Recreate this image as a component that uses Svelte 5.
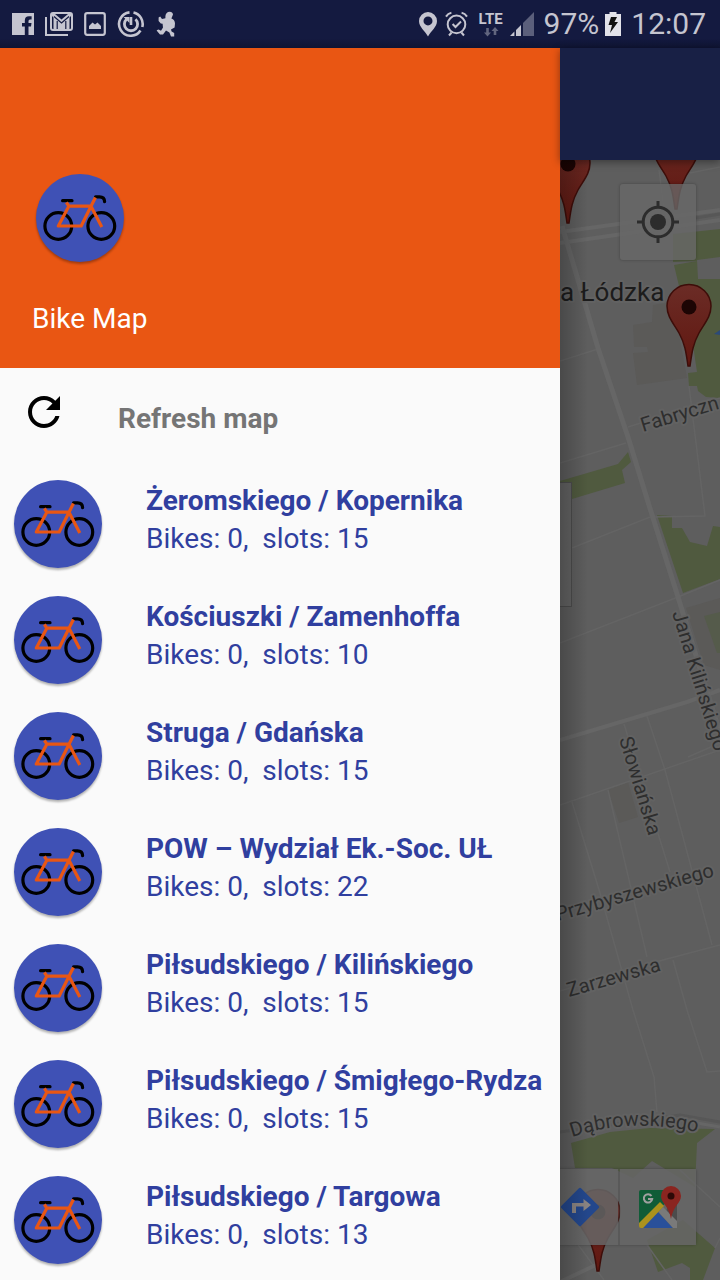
<script>
  const stations = [
    { name: 'Żeromskiego / Kopernika', bikes: 0, slots: 15 },
    { name: 'Kościuszki / Zamenhoffa', bikes: 0, slots: 10 },
    { name: 'Struga / Gdańska', bikes: 0, slots: 15 },
    { name: 'POW – Wydział Ek.-Soc. UŁ', bikes: 0, slots: 22 },
    { name: 'Piłsudskiego / Kilińskiego', bikes: 0, slots: 15 },
    { name: 'Piłsudskiego / Śmigłego-Rydza', bikes: 0, slots: 15 },
    { name: 'Piłsudskiego / Targowa', bikes: 0, slots: 13 }
  ];
  const markers = [
    { x: 568, y: 223 },
    { x: 676, y: 209 },
    { x: 689, y: 366 },
    { x: 598, y: 1271 }
  ];
</script>

{#snippet bikeLogo()}
  <svg class="logo" viewBox="0 0 88 88" aria-hidden="true">
    <circle cx="44" cy="44" r="44" fill="#3f51b5" />
    <g fill="none" stroke-width="3.2" stroke-linecap="round" stroke-linejoin="round">
      <g stroke="#000">
        <circle cx="22.3" cy="52" r="13.4" />
        <circle cx="65.3" cy="52" r="13.4" />
        <path d="M26.6 26.7H36M59.5 22.9H63.5Q68.4 23 68.6 27.6" />
      </g>
      <path stroke="#e95613" stroke-linecap="butt" d="M30.4 28.3L32.8 32.2L22.3 52H45.2L55 32.2H32.8M59.4 23.6L55 32.2L65.8 53" />
    </g>
  </svg>
{/snippet}

<div class="app">
  <header class="status">
    <div class="notes">
      <svg width="22" height="24" viewBox="0 0 22 24"><path fill="#c5c5d0" d="M0 1H22V23H16.500V14.500H19L19.500 11H16.500V9Q16.500 7.500 18 7.500H19.600V4.200H17Q12.800 4.200 12.800 8.600V11H10V14.500H12.800V23H0Z" /></svg>
      <svg width="28" height="24" viewBox="0 0 28 24"><g fill="none" stroke="#c5c5d0" stroke-width="2"><path d="M1 5V23H23" /><rect x="6" y="1" width="21" height="17" rx="2" /></g><path fill="#c5c5d0" d="M7 2H10L16.500 7.500L23 2H26V4L24.500 5.500V17H8.500V5.500L7 4Z" /><path fill="none" stroke="#141a40" stroke-width="1.200" d="M9 4.500L16.500 11L24 4.500M12.200 9V17M20.800 9V17" /></svg>
      <svg width="22" height="24" viewBox="0 0 22 24"><rect x="1.200" y="1.200" width="19.600" height="21.600" rx="2" fill="none" stroke="#c5c5d0" stroke-width="2.200" /><path fill="#c5c5d0" d="M5 17V14L8.500 10.500L11 12.500L13.500 10.500L17 14V17Z" /></svg>
      <svg width="28" height="26" viewBox="0 0 28 26"><g fill="none" stroke="#c5c5d0"><path stroke-width="2.600" d="M12.500 1.400A11.700 11.700 0 1 0 23.500 19.500M25.300 16A11.700 11.700 0 0 0 16.500 1.600" /><path stroke-width="2.800" d="M9.500 8.300A6.600 6.600 0 1 0 18.500 8.300" /><path stroke-width="2.600" d="M14 14V6" /></g><path fill="#c5c5d0" d="M6.500 6H12.500V12Z" /></svg>
      <svg width="20" height="26" viewBox="0 0 20 26"><path fill="#c5c5d0" d="M12 1Q16.400 0 17 3.500L15.400 7.500Q18.800 8.500 19 12.500L18.600 16.500L15 18.600L15.600 20.400L18.200 22V25.600H15L13.400 21.600L10 19.600L7 23.600H4L1.400 20.400L.6 19.200L2.600 18.400L5 19.800L7 16.400L6.600 12.800L4.800 12.600L2.600 10V6.600L4.200 5.600L6 8L9.400 7.200Q9 2.400 12 1Z" /></svg>
    </div>
    <div class="system">
      <svg width="20" height="26" viewBox="0 0 20 26"><path fill="#c5c5d0" fill-rule="evenodd" d="M10 1A9 9 0 0 0 1 10C1 16 7 20 10 25.400C13 20 19 16 19 10A9 9 0 0 0 10 1ZM10 5.400A4.500 4.500 0 1 1 10 14.400A4.500 4.500 0 1 1 10 5.400Z" /></svg>
      <svg width="24" height="26" viewBox="0 0 24 26"><g fill="none" stroke="#c5c5d0" stroke-width="2"><circle cx="12.500" cy="13.400" r="8.800" /><path d="M8.600 13L11.500 16L17 10.500M2 5.600Q4 2.400 7.400 1.800M23 5.600Q21 2.400 17.600 1.800M7.600 21.500L5 24.500M17.400 21.500L20 24.500" /></g></svg>
      <div class="network apart">
        <b>LTE</b>
        <svg width="16" height="10" viewBox="0 0 16 10"><path fill="#62667f" d="M3.200 1H5.800V5.500H8L4.500 9.500L1 5.500H3.200ZM10.700 8H13.300V4H15.500L12 0L8.500 4H10.700Z" /></svg>
      </div>
      <svg width="24" height="26" viewBox="0 0 24 26"><path fill="#5b5f7b" d="M13 12L24 1V25H13Z" /><path fill="#c5c5d0" d="M0 25L4.400 20.600V25ZM6 19L11 14V25H6Z" /></svg>
      <span class="apart">97%</span>
      <svg width="16" height="26" viewBox="0 0 16 26"><path fill="#e3e3ea" d="M0 3H4.500V1H11.500V3H16V25H0Z" /><path fill="#111" d="M6 6H12L9.500 11H13L5 22L7 14H3.500Z" /></svg>
      <span class="apart">12:07</span>
    </div>
  </header>

  <div class="body">
    <nav class="drawer">
      <div class="brand">
        {@render bikeLogo()}
        <span>Bike Map</span>
      </div>
      <button class="refresh">
        <svg width="48" height="48" viewBox="0 0 24 24" aria-hidden="true"><path d="M17.65 6.35C16.2 4.9 14.21 4 12 4c-4.420 0-7.990 3.580-7.990 8s3.570 8 7.990 8c3.730 0 6.840-2.550 7.730-6h-2.080c-.82 2.330-3.040 4-5.650 4-3.310 0-6-2.690-6-6s2.690-6 6-6c1.660 0 3.140.69 4.220 1.780L13 11h7V4l-2.350 2.350z" /></svg>
        <span>Refresh map</span>
      </button>
      {#each stations as s}
        <button class="station">
          {@render bikeLogo()}
          <span class="info">
            <strong>{s.name}</strong>
            <span>{`Bikes: ${s.bikes},  slots: ${s.slots}`}</span>
          </span>
        </button>
      {/each}
    </nav>

    <main class="content">
      <div class="toolbar"></div>
      <div class="map">
        <svg class="canvas" viewBox="560 160 160 1120" preserveAspectRatio="xMinYMin slice">
          <defs>
            <linearGradient id="pin" x1="0" y1="0" x2="0" y2="1">
              <stop offset="0" stop-color="#6b2c26" />
              <stop offset="1" stop-color="#611710" />
            </linearGradient>
            <path id="curve" d="M572 1137Q635 1116 704 1134" />
          </defs>
          <g fill="#5b5a58">
            <path d="M633 325L652 322L653 305L673 302L687 378L637 385L633 353L648 352L647 347L634 347ZM608 790L628 782L638 817L619 823ZM686 608L720 598V670L704 665Z" />
          </g>
          <g fill="#505a3f">
            <path d="M673 234L720 229V257L697 260L698 279H720V398L706 397L698 391L697 386H689L688 373L697 372L693 345L674 265L697 261L673 262Z" />
            <path d="M560 481L618 464L628 452L631 462L622 470L625 483L572 499L560 502Z" />
            <path d="M657 515L672 516V528H682L690 542L707 546L713 526L720 527V579L683 593Z" />
            <path d="M571 1143L610 1132L650 1128L715 1129L697 1143L695 1187L652 1161L633 1178L612 1168H575Z" />
            <path d="M647 1240L683 1220L715 1248L703 1280H690V1268L682 1263L658 1272Z" />
            <path fill="#555b4b" d="M704 616L720 612V653H717Z" />
          </g>
          <path fill="#2c4a78" d="M714 334L720 330V335Z" />
          <g fill="none" stroke="#646464" stroke-width="1.5">
            <path d="M560 361L598 349M560 463L626 443M628 427L720 398M659 170L664 210M720 167L690 173M689 386L705 516L650 517L572 548M560 643L678 597L720 580" />
            <path d="M560 805L720 750M572 802L600 893L633 1010L654 1077L657 1112M608 790L647 957M624 724L670 872M647 716L665 770L712 945M663 960L720 945M560 991L663 960M673 960L687 1010L707 1072L720 1071" />
            <path d="M688 757L720 743M560 1220L604 1280M680 1170L720 1207M640 1235L672 1280M715 1248L720 1238" />
          </g>
          <g fill="none" stroke="#666">
            <path stroke-width="4" d="M560 232L720 210M560 243L720 220M560 740L687 702L720 690M560 1282L600 1263" />
            <path stroke-width="5" d="M562 226L578 280L598 348L628 437L648 502L678 597L722 740" />
            <path stroke="#575757" stroke-width="3" d="M560 1132L680 1115L720 1122M696 218L720 214" />
            <path stroke-width="3" d="M680 1120L720 1127" />
          </g>
          <path fill="#4c4c4c" d="M560 482H572V607H560Z" />
          <path fill="#636363" d="M560 483H571V606H560Z" />
          <g class="labels">
            <text class="place" x="560" y="301">a Łódzka</text>
            <text transform="translate(643 432) rotate(-17)">Fabryczn</text>
            <text transform="translate(672 613) rotate(73)">Jana Kilińskiego</text>
            <text transform="translate(619 739) rotate(73)">Słowiańska</text>
            <text text-anchor="end" transform="translate(715 876) rotate(-16)">Przybyszewskiego</text>
            <text transform="translate(569 997) rotate(-16)">Zarzewska</text>
            <text class="wide"><textPath href="#curve">Dąbrowskiego</textPath></text>
          </g>
          {#each markers as m}
            <g transform="translate({m.x} {m.y})">
              <path fill="url(#pin)" stroke="#3d0d09" stroke-width="1.5" d="M0 -81.500A22 22 0 0 1 22 -60C22 -49 15 -42 10 -33C4 -22 3 -14 1 0H-1C-3 -14 -4 -22 -10 -33C-15 -42 -22 -49 -22 -60A22 22 0 0 1 0 -81.500Z" />
              <circle cy="-59" r="7.500" fill="#1d0504" />
            </g>
          {/each}
        </svg>
        <button class="control locate" aria-label="My location">
          <svg width="44" height="44" viewBox="0 0 44 44"><g fill="none" stroke="#2c2c2c" stroke-width="3"><circle cx="22" cy="22" r="14.800" /><path d="M22 1V8M22 36V43M1 22H8M36 22H43" /></g><circle cx="22" cy="22" r="8" fill="#2c2c2c" /></svg>
        </button>
        <div class="links">
          <button class="control" aria-label="Directions">
            <svg width="42" height="42" viewBox="0 0 42 42"><rect x="7" y="7" width="28" height="28" rx="1.500" transform="rotate(45 21 21)" fill="#23478c" /><path fill="#8a8482" d="M13 27V17H24.500V13L32 19L24.500 25V20.500H17V27Z" /></svg>
          </button>
          <button class="control" aria-label="Open in Google Maps">
            <svg class="maps" width="44" height="44" viewBox="0 0 44 44">
              <path fill="#105c37" d="M5 5H30V18L3 40V7Q3 5 5 5Z" />
              <path fill="#29509a" d="M22 27L37 43H7Z" />
              <path fill="#4c4c4c" d="M32 16H41V41L30 30Z" />
              <path fill="#7a7a7a" d="M22.500 27L27 22L41 36V43H37Z" />
              <path fill="#ab921d" d="M3 38L24 17L28 21L7 43H5Q3 43 3 41Z" />
              <path fill="none" stroke="#a0a0a0" stroke-width="2" d="M15.500 11A4.200 4.200 0 1 0 16.200 14H12" />
              <path fill="#8a2520" d="M35 1A10 10 0 0 1 45 11C45 18 37 21 35 34C33 21 25 18 25 11A10 10 0 0 1 35 1Z" />
              <circle cx="35" cy="11" r="3.500" fill="#2d0907" />
            </svg>
          </button>
        </div>
      </div>
    </main>
  </div>
</div>

<style>
  :global(body) {
    margin: 0;
    background: #fafafa;
  }
  .app {
    display: flex;
    flex-direction: column;
    min-height: 100vh;
    font-family: Roboto, 'Noto Sans', sans-serif;
    font-size: 28px;
    line-height: 38px;
  }
  button {
    font: inherit;
    color: inherit;
    border: 0;
    padding: 0;
    background: none;
    text-align: left;
    cursor: pointer;
  }
  svg {
    display: block;
    flex: none;
  }
  .status {
    display: flex;
    justify-content: space-between;
    align-items: center;
    height: 48px;
    padding: 0 14px 0 12px;
    background: linear-gradient(#141a40 80%, #0f1433);
    color: #c5c5d0;
    font-size: 30px;
  }
  .notes {
    display: flex;
    align-items: center;
    gap: 11px;
  }
  .system {
    display: flex;
    align-items: center;
    gap: 6px;
  }
  .network {
    display: flex;
    flex-direction: column;
    align-items: center;
    width: 26px;
    font-size: 15px;
    line-height: 16px;
  }
  .apart {
    margin-left: 4px;
  }
  .body {
    flex: 1;
    display: grid;
    grid-template-columns: minmax(0, 7fr) minmax(0, 2fr);
  }
  .drawer {
    display: flex;
    flex-direction: column;
    background: #fafafa;
  }
  .logo {
    width: 88px;
    height: 88px;
    overflow: visible;
    filter: drop-shadow(0 2px 1px rgba(0, 0, 0, 0.3));
  }
  .brand {
    display: flex;
    flex-direction: column;
    justify-content: flex-end;
    gap: 38px;
    box-sizing: border-box;
    height: 320px;
    padding: 30px 32px;
    background: #e95613;
    color: #fff;
  }
  .brand .logo {
    margin-left: 4px;
  }
  .refresh {
    display: flex;
    align-items: flex-start;
    gap: 50px;
    height: 98px;
    padding: 20px;
    color: #757575;
    font-weight: 700;
  }
  .refresh span {
    padding-top: 12px;
  }
  .station {
    display: flex;
    align-items: flex-start;
    gap: 44px;
    padding: 14px;
    color: #303f9f;
  }
  .info {
    display: flex;
    flex-direction: column;
    padding-top: 2px;
    white-space: pre;
  }
  .content {
    position: relative;
    display: flex;
    flex-direction: column;
  }
  .content::after {
    content: '';
    position: absolute;
    inset: 0 auto 0 0;
    width: 28px;
    background: linear-gradient(90deg, rgba(0, 0, 0, 0.22), transparent);
    pointer-events: none;
  }
  .toolbar {
    z-index: 1;
    height: 112px;
    background: #182045;
    box-shadow: 0 2px 8px rgba(0, 0, 0, 0.4);
  }
  .map {
    position: relative;
    flex: 1;
    overflow: hidden;
    background: #5e5e5e;
  }
  .canvas {
    position: absolute;
    inset: 0;
    width: 100%;
    height: 100%;
  }
  .labels {
    font-size: 20px;
    fill: #2e2e2e;
    stroke: #626262;
    stroke-width: 4px;
    stroke-linejoin: round;
    paint-order: stroke;
  }
  .place {
    font-size: 26px;
    fill: #1c1c1c;
  }
  .control {
    display: grid;
    place-items: center;
    width: 76px;
    height: 76px;
    background: rgba(104, 104, 104, 0.8);
  }
  .maps {
    overflow: visible;
  }
  .locate {
    position: absolute;
    top: 24px;
    right: 24px;
    border-radius: 3px;
    box-shadow: 0 0 3px rgba(0, 0, 0, 0.3);
  }
  .links {
    position: absolute;
    right: 24px;
    bottom: 35px;
    display: flex;
    gap: 2px;
    border-radius: 3px;
    background: rgba(80, 80, 80, 0.3);
    box-shadow: 0 0 3px rgba(0, 0, 0, 0.3);
  }
</style>
